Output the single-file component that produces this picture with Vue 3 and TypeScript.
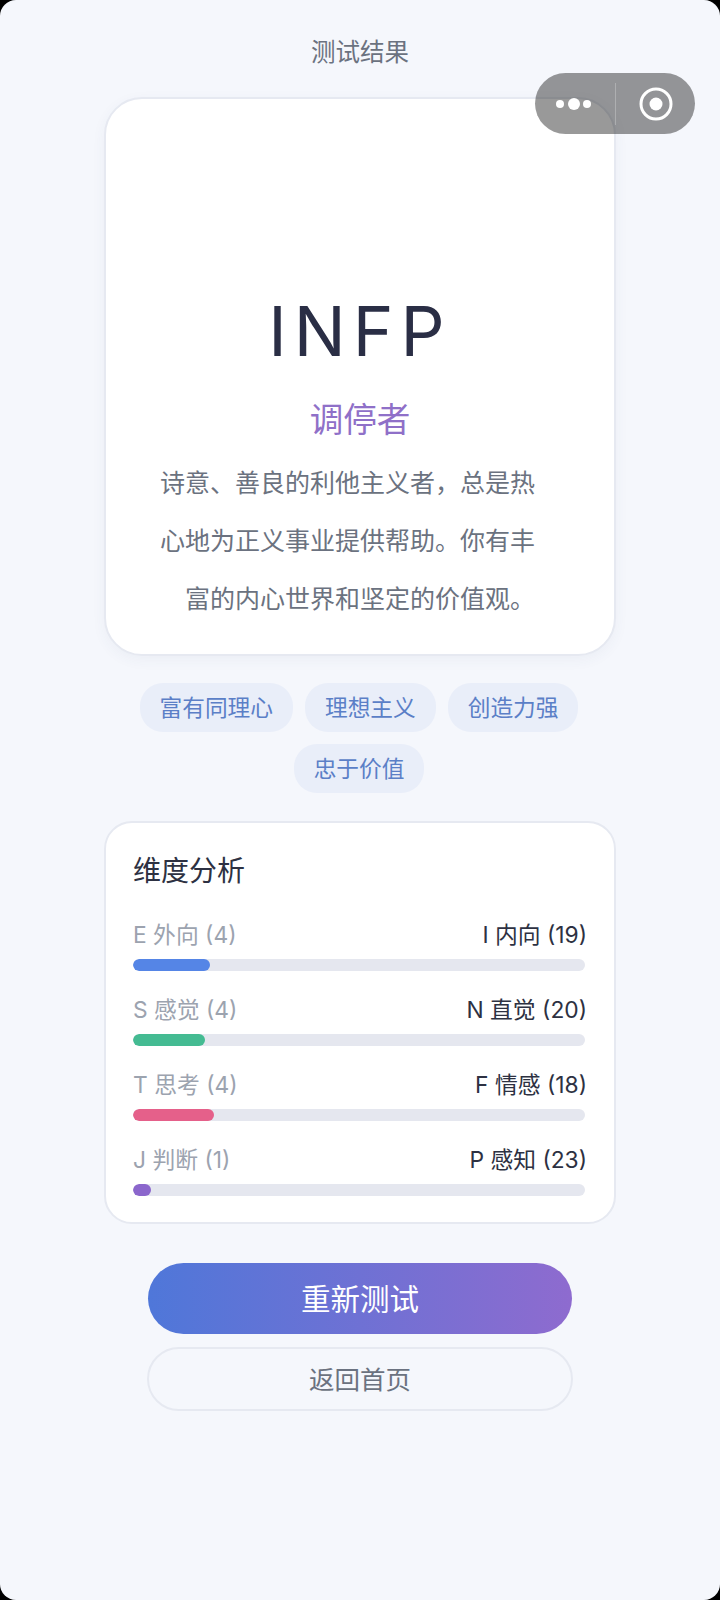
<script setup lang="ts">
interface Dim { left: string; leftScore: number; right: string; rightScore: number; color: string }
const tags: string[] = ['富有同理心', '理想主义', '创造力强', '忠于价值']
const dims: Dim[] = [
  { left: 'E 外向', leftScore: 4, right: 'I 内向', rightScore: 19, color: '#5585e6' },
  { left: 'S 感觉', leftScore: 4, right: 'N 直觉', rightScore: 20, color: '#44bb92' },
  { left: 'T 思考', leftScore: 4, right: 'F 情感', rightScore: 18, color: '#e5608a' },
  { left: 'J 判断', leftScore: 1, right: 'P 感知', rightScore: 23, color: '#8b66cc' },
]
const pct = (d: Dim): string => `${Math.floor((d.leftScore / (d.leftScore + d.rightScore)) * 100)}%`
</script>

<template>
  <div class="screen">
    <main class="page">
      <h1 class="title">测试结果</h1>
      <section class="card">
        <div class="type">INFP</div>
        <div class="role">调停者</div>
        <p class="desc">诗意、善良的利他主义者，总是热心地为正义事业提供帮助。你有丰富的内心世界和坚定的价值观。</p>
      </section>
      <div class="tags">
        <span v-for="t in tags" :key="t" class="tag">{{ t }}</span>
      </div>
      <section class="panel">
        <h2 class="panel-title">维度分析</h2>
        <div v-for="d in dims" :key="d.left" class="dim">
          <div class="dim-labels">
            <span class="muted">{{ d.left }} ({{ d.leftScore }})</span>
            <span class="strong">{{ d.right }} ({{ d.rightScore }})</span>
          </div>
          <div class="track">
            <div class="fill" :style="{ width: pct(d), background: d.color }"></div>
          </div>
        </div>
      </section>
      <button class="btn primary">重新测试</button>
      <button class="btn ghost">返回首页</button>
    </main>
    <div class="capsule">
      <div class="cap-side dots">
        <i class="dot"></i><i class="dot big"></i><i class="dot"></i>
      </div>
      <div class="cap-line"></div>
      <div class="cap-side ring">
        <svg width="34" height="34" viewBox="0 0 34 34"><circle cx="17" cy="17" r="15" fill="none" stroke="#fff" stroke-width="3"/><circle cx="17" cy="17" r="6.5" fill="#fff"/></svg>
      </div>
    </div>
  </div>
</template>

<style>
html, body { margin: 0; background: #000; }
</style>

<style scoped>
.screen {
  position: relative;
  width: 720px;
  height: 1600px;
  background: #f5f7fc;
  border-radius: 16px;
  overflow: hidden;
  font-family: Inter, "Noto Sans CJK SC", sans-serif;
}
.page {
  display: flex;
  flex-direction: column;
  align-items: center;
}
.title {
  margin: 35px 0 0;
  height: 34px;
  line-height: 34px;
  font-size: 24.5px;
  font-weight: 400;
  color: #6b7280;
}
.card {
  box-sizing: border-box;
  width: 512px;
  height: 559px;
  margin-top: 28px;
  padding-top: 190px;
  display: flex;
  flex-direction: column;
  align-items: center;
  background: #fff;
  border: 2px solid #e6e9f1;
  border-radius: 38px;
  box-shadow: 0 4px 14px rgba(60, 70, 110, 0.05);
}
.type {
  font-size: 69px;
  line-height: 84px;
  font-weight: 400;
  letter-spacing: 7px;
  color: #2a2e45;
}
.role {
  margin-top: 23px;
  font-size: 33.6px;
  line-height: 48px;
  color: #8f70c8;
}
.desc {
  width: 376px;
  margin: 10px 26px 0 0;
  font-size: 25px;
  line-height: 58px;
  text-align: right;
  color: #6b7280;
}
.tags {
  box-sizing: border-box;
  width: 512px;
  margin-top: 27px;
  padding-right: 2px;
  display: flex;
  flex-wrap: wrap;
  justify-content: center;
  gap: 12px;
}
.tag {
  height: 49px;
  line-height: 49px;
  padding: 0 20px;
  font-size: 22.7px;
  color: #5b7fc7;
  background: #e9eef9;
  border-radius: 23px;
}
.panel {
  box-sizing: border-box;
  width: 512px;
  height: 403px;
  margin-top: 28px;
  padding: 27px 29px 0 27px;
  background: #fff;
  border: 2px solid #e6e9f1;
  border-radius: 28px;
}
.panel-title {
  margin: 0 0 25px;
  font-size: 28px;
  line-height: 42px;
  font-weight: 400;
  color: #2d3142;
}
.dim { height: 75px; }
.dim-labels {
  display: flex;
  justify-content: space-between;
  height: 36px;
  margin-right: -2px;
  line-height: 36px;
  font-size: 22.8px;
}
.muted { color: #9ca3af; }
.strong { color: #2d3142; }
.track {
  height: 12px;
  margin-top: 6px;
  background: #e5e7ef;
  border-radius: 6px;
  overflow: hidden;
}
.fill { height: 100%; border-radius: 6px; }
.btn {
  display: block;
  box-sizing: border-box;
  width: 424px;
  border-radius: 36px;
  font-family: inherit;
}
.primary {
  height: 71px;
  margin-top: 39px;
  padding: 0 0 3px;
  border: 0;
  font-size: 29.5px;
  color: #fff;
  background: linear-gradient(90deg, #4f77d9, #8e6bcf);
}
.ghost {
  width: 426px;
  height: 64px;
  margin-top: 13px;
  padding: 0 0 3px;
  border: 2px solid #e6e9f1;
  font-size: 25.5px;
  color: #6b7280;
  background: transparent;
}
.capsule {
  position: absolute;
  top: 73px;
  left: 535px;
  width: 160px;
  height: 61px;
  display: flex;
  align-items: center;
  background: rgba(0, 0, 0, 0.4);
  border-radius: 31px;
}
.cap-side {
  flex: 1;
  display: flex;
  align-items: center;
  justify-content: center;
  gap: 3.5px;
}
.dots { padding-right: 2px; }
.ring { padding-left: 2px; }
.cap-line { width: 1px; height: 42px; background: rgba(255, 255, 255, 0.25); }
.dot { width: 8px; height: 8px; border-radius: 50%; background: #fff; }
.dot.big { width: 12px; height: 12px; }
</style>
